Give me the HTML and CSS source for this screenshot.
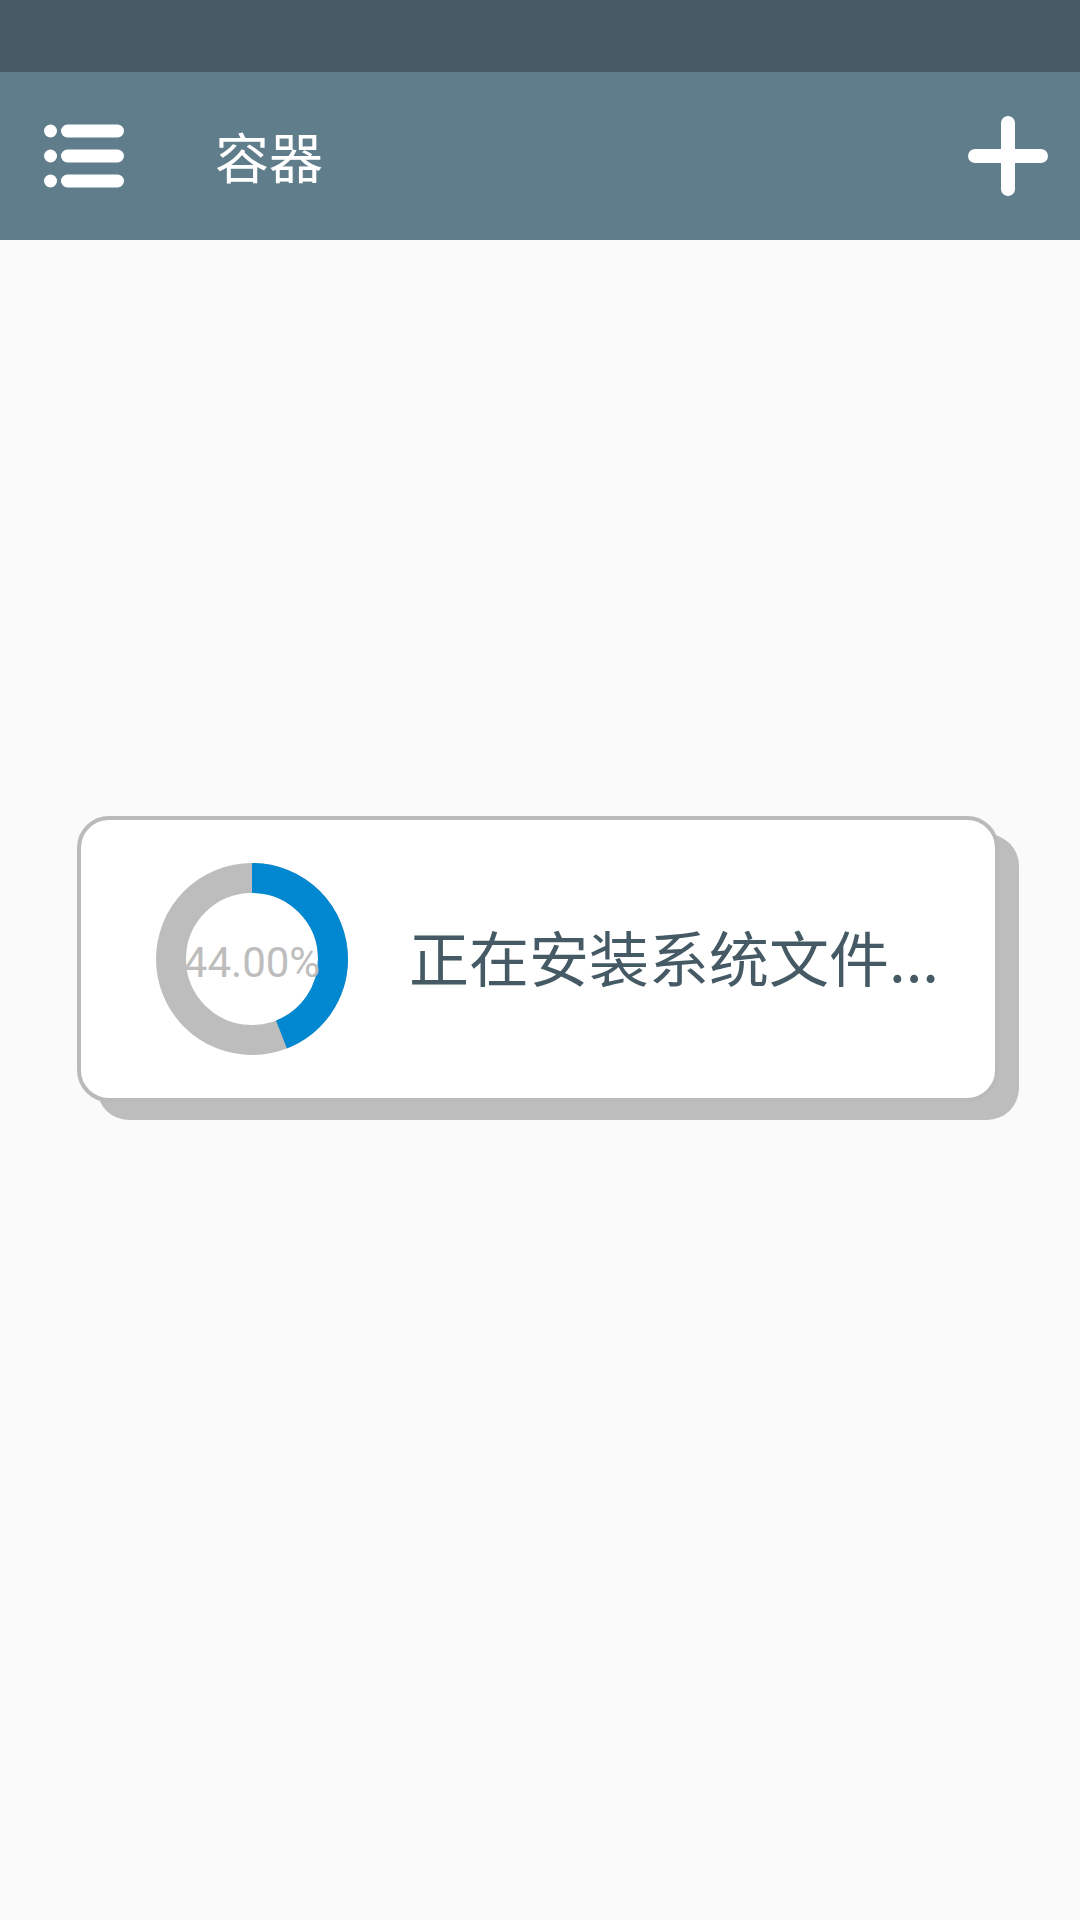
FILE: index.html
```html
<!DOCTYPE html>
<html lang="zh-CN">
<head>
<meta charset="utf-8">
<title>容器</title>
<link rel="stylesheet" href="styles.css">
</head>
<body>
<div class="statusbar"></div>
<header class="toolbar">
  <svg class="menu-icon" width="82" height="64" viewBox="0 0 82 64" aria-hidden="true">
    <g fill="#fff">
      <circle cx="7.5" cy="7" r="6.5"/>
      <circle cx="7.5" cy="32" r="6.5"/>
      <circle cx="7.5" cy="57" r="6.5"/>
    </g>
    <g stroke="#fff" stroke-width="13" stroke-linecap="round">
      <line x1="24.5" y1="7" x2="74.5" y2="7"/>
      <line x1="24.5" y1="32" x2="74.5" y2="32"/>
      <line x1="24.5" y1="57" x2="74.5" y2="57"/>
    </g>
  </svg>
  <h1 class="title">容器</h1>
  <svg class="add-icon" width="80" height="80" viewBox="0 0 80 80" aria-hidden="true">
    <g stroke="#fff" stroke-width="14" stroke-linecap="round">
      <line x1="40" y1="7" x2="40" y2="73"/>
      <line x1="7" y1="40" x2="73" y2="40"/>
    </g>
  </svg>
</header>
<main class="content">
  <div class="card">
    <div class="donut">
      <svg width="192" height="192" viewBox="0 0 192 192" aria-hidden="true">
        <circle cx="96" cy="96" r="81" fill="none" stroke="#bdbdbd" stroke-width="30"/>
        <circle cx="96" cy="96" r="81" fill="none" stroke="#0288d1" stroke-width="30"
          stroke-dasharray="223.94 508.94" transform="rotate(-90 96 96)"/>
      </svg>
      <span class="donut-label">44.00%</span>
    </div>
    <p class="message">正在安装系统文件...</p>
  </div>
</main>
</body>
</html>
```

FILE: styles.css
```css
html, body {
  margin: 0;
  padding: 0;
}
body {
  width: 1080px;
  height: 1920px;
  background: #fafafa;
  font-family: "Noto Sans CJK SC", "Noto Sans", Roboto, sans-serif;
  overflow: hidden;
}
.statusbar {
  height: 72px;
  background: #475b66;
}
.toolbar {
  height: 168px;
  background: #607d8b;
  display: flex;
  align-items: center;
  padding: 0 32px 0 43px;
  box-sizing: border-box;
}
.menu-icon {
  display: block;
  flex: none;
}
.title {
  margin: 0 0 0 90px;
  font-size: 54px;
  font-weight: 400;
  color: #ffffff;
  line-height: 1;
  flex: 1;
}
.add-icon {
  display: block;
  flex: none;
}
.content {
  padding-top: 576px;
  padding-left: 77px;
}
.card {
  width: 922px;
  height: 286px;
  box-sizing: border-box;
  background: #ffffff;
  border: 4px solid #bababa;
  border-radius: 32px;
  box-shadow: 20px 18px 0 0 #bdbdbd;
  display: flex;
  align-items: center;
  padding-left: 75px;
}
.donut {
  display: grid;
  width: 192px;
  height: 192px;
  flex: none;
}
.donut > svg,
.donut > .donut-label {
  grid-area: 1 / 1;
}
.donut > svg {
  display: block;
}
.donut-label {
  align-self: center;
  justify-self: center;
  padding-top: 7px;
  font-family: Roboto, "Noto Sans", sans-serif;
  font-size: 42px;
  color: #bdbdbd;
  line-height: 1;
  white-space: nowrap;
}
.message {
  margin: 0 0 0 61px;
  padding-bottom: 6px;
  font-size: 60px;
  color: #455a64;
  line-height: 1;
  white-space: nowrap;
}
```
